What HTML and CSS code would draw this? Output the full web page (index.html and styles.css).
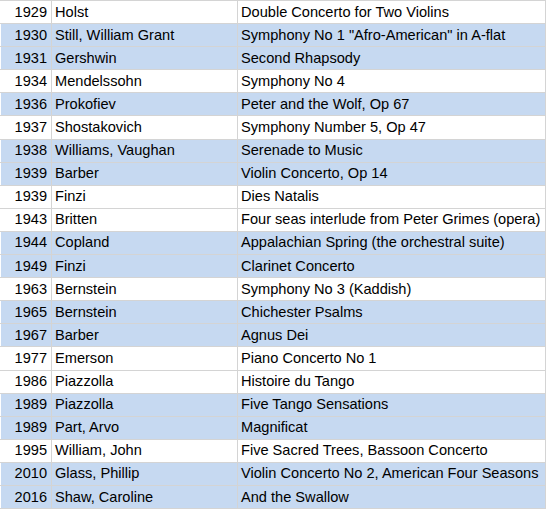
FILE: index.html
```html
<!DOCTYPE html>
<html>
<head>
<meta charset="utf-8">
<link rel="stylesheet" href="styles.css">
</head>
<body>
<table class="grid">
<colgroup><col class="c-year"><col class="c-comp"><col class="c-work"></colgroup>
<tbody>
<tr><td class="yr">1929</td><td>Holst</td><td>Double Concerto for Two Violins</td></tr>
<tr class="hl"><td class="yr">1930</td><td>Still, William Grant</td><td>Symphony No 1 "Afro-American" in A-flat</td></tr>
<tr class="hl"><td class="yr">1931</td><td>Gershwin</td><td>Second Rhapsody</td></tr>
<tr><td class="yr">1934</td><td>Mendelssohn</td><td>Symphony No 4</td></tr>
<tr class="hl"><td class="yr">1936</td><td>Prokofiev</td><td>Peter and the Wolf, Op 67</td></tr>
<tr><td class="yr">1937</td><td>Shostakovich</td><td>Symphony Number 5, Op 47</td></tr>
<tr class="hl"><td class="yr">1938</td><td>Williams, Vaughan</td><td>Serenade to Music</td></tr>
<tr class="hl"><td class="yr">1939</td><td>Barber</td><td>Violin Concerto, Op 14</td></tr>
<tr><td class="yr">1939</td><td>Finzi</td><td>Dies Natalis</td></tr>
<tr><td class="yr">1943</td><td>Britten</td><td>Four seas interlude from Peter Grimes (opera)</td></tr>
<tr class="hl"><td class="yr">1944</td><td>Copland</td><td>Appalachian Spring (the orchestral suite)</td></tr>
<tr class="hl"><td class="yr">1949</td><td>Finzi</td><td>Clarinet Concerto</td></tr>
<tr><td class="yr">1963</td><td>Bernstein</td><td>Symphony No 3 (Kaddish)</td></tr>
<tr class="hl"><td class="yr">1965</td><td>Bernstein</td><td>Chichester Psalms</td></tr>
<tr class="hl"><td class="yr">1967</td><td>Barber</td><td>Agnus Dei</td></tr>
<tr><td class="yr">1977</td><td>Emerson</td><td>Piano Concerto No 1</td></tr>
<tr><td class="yr">1986</td><td>Piazzolla</td><td>Histoire du Tango</td></tr>
<tr class="hl"><td class="yr">1989</td><td>Piazzolla</td><td>Five Tango Sensations</td></tr>
<tr class="hl"><td class="yr">1989</td><td>Part, Arvo</td><td>Magnificat</td></tr>
<tr><td class="yr">1995</td><td>William, John</td><td>Five Sacred Trees, Bassoon Concerto</td></tr>
<tr class="hl"><td class="yr">2010</td><td>Glass, Phillip</td><td>Violin Concerto No 2, American Four Seasons</td></tr>
<tr class="hl"><td class="yr">2016</td><td>Shaw, Caroline</td><td>And the Swallow</td></tr>
</tbody>
</table>
</body>
</html>
```

FILE: styles.css
```css
html, body {
  margin: 0;
  padding: 0;
  background: #ffffff;
}

.grid {
  border-collapse: collapse;
  table-layout: fixed;
  width: 545px;
  margin-top: 0;
  font-family: "Liberation Sans", Arial, sans-serif;
  font-size: 14.6px;
  color: #000000;
}

.c-year { width: 51px; }
.c-comp { width: 186px; }
.c-work { width: 308px; }

.grid td {
  border: 1px solid #d4d4d4;
  height: 22.1px;
  padding: 0 3px;
  white-space: nowrap;
  overflow: hidden;
  vertical-align: middle;
  line-height: 17px;
}

.grid td.yr {
  text-align: right;
  padding-right: 4px;
}

.grid tr.hl td {
  background: #c6d9f1;
}

.grid tr td:first-child {
  border-left-color: transparent;
}
```
